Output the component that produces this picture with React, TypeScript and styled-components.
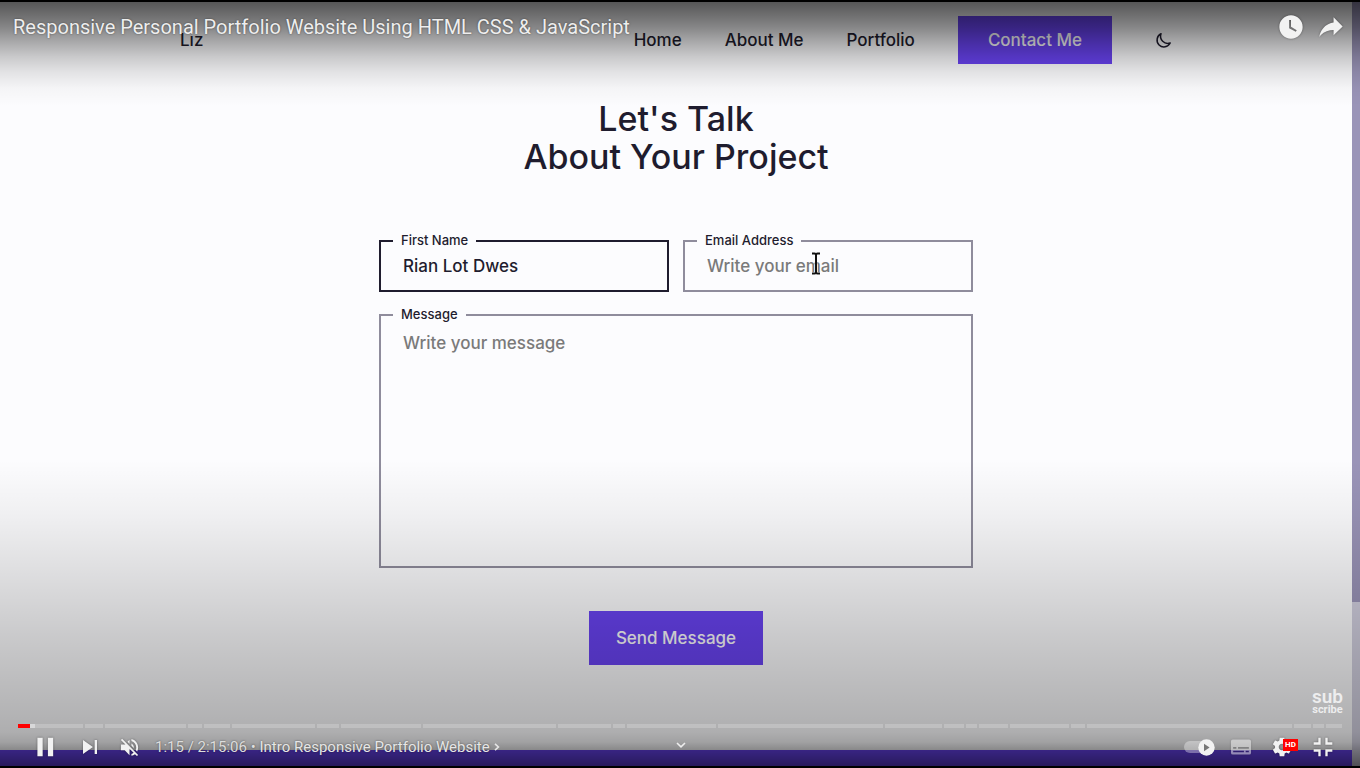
import React from "react";
import styled, { createGlobalStyle } from "styled-components";

const GlobalStyle = createGlobalStyle`
  * { box-sizing: border-box; }
  body { margin: 0; background: #000; }
  button, input, textarea { font: inherit; color: inherit; margin: 0; }
`;

const display = `Inter, "Noto Sans", sans-serif`;

const Player = styled.div`
  display: grid;
  min-height: 100vh;
  padding: 2px 0;
  background: #000;
`;

/* The recorded web page */

const Video = styled.div`
  grid-area: 1 / 1;
  display: flex;
  background: #fcfcfe;
  color: #1f1c2e;
  font: 500 17px/20px ${display};
`;

const Page = styled.div`
  flex: 1;
  min-width: 0;
  display: flex;
  flex-direction: column;
  align-items: center;
`;

const Scrollbar = styled.div`
  width: 8px;
  background: #d2d0e0;
`;

const ScrollThumb = styled.div`
  height: 78.5%;
  background: #9a94b8;
`;

const Header = styled.header`
  display: flex;
  align-items: center;
  justify-content: space-between;
  width: 100%;
  max-width: 992px;
  padding: 14px 0;
`;

const Nav = styled.nav`
  display: flex;
  align-items: center;
  gap: 43px;
`;

const NavLink = styled.a`
  color: inherit;
  text-decoration: none;
`;

const Filled = styled.a`
  padding: 14px 30px;
  background: #6943f2;
  color: #fcfcfe;
  text-decoration: none;
`;

const PlainButton = styled.button`
  display: grid;
  place-items: center;
  padding: 0;
  border: 0;
  background: none;
`;

const Heading = styled.h1`
  margin: 22px 0 64px;
  font-size: 34px;
  font-weight: 500;
  line-height: 38px;
  text-align: center;
`;

const Form = styled.form`
  display: grid;
  grid-template-columns: 1fr 1fr;
  gap: 22px 14px;
  width: 100%;
  max-width: 594px;
`;

const Field = styled.div<{ $wide?: boolean }>`
  position: relative;
  display: grid;
  grid-column: ${(p) => (p.$wide ? "1 / -1" : "auto")};
`;

const Label = styled.label`
  position: absolute;
  top: -8px;
  left: 14px;
  padding: 0 8px;
  background: #fcfcfe;
  font-size: 13px;
  line-height: 16px;
`;

const TextInput = styled.input`
  width: 100%;
  height: 52px;
  padding: 0 22px;
  border: 2px solid #8f8c9c;
  border-radius: 0;
  background: none;
  outline: none;
  &::placeholder { color: #7a7a7a; opacity: 1; }
  &:not(:placeholder-shown) { border-color: #1f1c2e; }
`;

const TextArea = styled.textarea`
  width: 100%;
  height: 254px;
  padding: 17px 22px;
  border: 2px solid #8f8c9c;
  border-radius: 0;
  background: none;
  outline: none;
  resize: none;
  &::placeholder { color: #7a7a7a; opacity: 1; }
`;

const Submit = styled.button`
  grid-column: 1 / -1;
  justify-self: center;
  margin-top: 21px;
  padding: 17px 27px;
  border: 0;
  background: #6943f2;
  color: #fcfcfe;
`;

const Pointer = styled.svg`
  position: absolute;
  top: 12px;
  left: 128px;
`;

const Footer = styled.footer`
  align-self: stretch;
  height: 16px;
  margin-top: auto;
  background: #6943f2;
`;

/* The player controls over it */

const Chrome = styled.div`
  grid-area: 1 / 1;
  z-index: 1;
  display: flex;
  flex-direction: column;
  color: #eee;
  font-family: Roboto, sans-serif;
  background:
    linear-gradient(to bottom,
      rgba(0, 0, 0, 0.66) 0px,
      rgba(0, 0, 0, 0.6) 8px,
      rgba(0, 0, 0, 0.47) 25px,
      rgba(0, 0, 0, 0.33) 40px,
      rgba(0, 0, 0, 0.2) 55px,
      rgba(0, 0, 0, 0.1) 70px,
      rgba(0, 0, 0, 0.03) 86px,
      rgba(0, 0, 0, 0) 104px),
    linear-gradient(to top,
      rgba(0, 0, 0, 0.62) 0px,
      rgba(0, 0, 0, 0.46) 16px,
      rgba(0, 0, 0, 0.36) 24px,
      rgba(0, 0, 0, 0.31) 34px,
      rgba(0, 0, 0, 0.29) 50px,
      rgba(0, 0, 0, 0.25) 86px,
      rgba(0, 0, 0, 0.2) 130px,
      rgba(0, 0, 0, 0.13) 186px,
      rgba(0, 0, 0, 0.05) 250px,
      rgba(0, 0, 0, 0) 306px);
`;

const TitleBar = styled.div`
  display: flex;
  align-items: center;
  padding: 6px 9px 0 13px;
`;

const Title = styled.a`
  flex: 1;
  color: #eee;
  font-size: 20px;
  line-height: 24px;
  text-decoration: none;
  text-shadow: 0 0 2px rgba(0, 0, 0, 0.5);
`;

const Control = styled(PlainButton)<{ $w: number }>`
  position: relative;
  width: ${(p) => p.$w}px;
  height: 38px;
  color: #f2f2f2;
  svg { filter: drop-shadow(0 0 1px rgba(0, 0, 0, 0.4)); }
`;

const Watermark = styled.button`
  display: flex;
  flex-direction: column;
  align-items: center;
  align-self: flex-end;
  margin: auto 17px 9px 0;
  padding: 0;
  border: 0;
  background: none;
  color: #ededee;
  font-size: 11px;
  font-weight: 700;
  line-height: 11px;
`;

const WatermarkTop = styled.span`
  font-size: 19px;
  font-weight: 600;
  line-height: 14px;
`;

const Seek = styled.div`
  position: relative;
  display: flex;
  gap: 2px;
  height: 4px;
  margin: 0 18px;
`;

const Chapter = styled.span<{ $size: number }>`
  flex: ${(p) => p.$size} 0 0;
  display: flex;
  background: rgba(255, 255, 255, 0.2);
`;

const Played = styled.span`
  width: 12px;
  background: #f00;
`;

const Loaded = styled.span`
  width: 5px;
  background: rgba(255, 255, 255, 0.4);
`;

const SeekInput = styled.input`
  position: absolute;
  inset: 0;
  width: 100%;
  margin: 0;
  opacity: 0;
`;

const Controls = styled.div`
  display: grid;
  grid-template-columns: 1fr auto 1fr;
  height: 38px;
  padding: 0 17px 0 18px;
`;

const Group = styled.div<{ $end?: boolean }>`
  display: flex;
  align-items: center;
  justify-content: ${(p) => (p.$end ? "flex-end" : "flex-start")};
`;

const Time = styled.span`
  margin-left: 3px;
  color: #ddd;
  font-size: 15px;
  line-height: 20px;
  white-space: pre;
  text-shadow: 0 0 2px rgba(0, 0, 0, 0.5);
`;

const ChapterButton = styled.button`
  display: flex;
  align-items: center;
  gap: 4px;
  padding: 0;
  border: 0;
  background: none;
  color: #e6e6e6;
  font-size: 15px;
  line-height: 20px;
  white-space: pre;
  text-shadow: 0 0 2px rgba(0, 0, 0, 0.5);
`;

const AutoplayLabel = styled.label`
  position: relative;
  display: grid;
  place-items: center;
  width: 43px;
  height: 38px;
`;

const Autoplay = styled.input`
  appearance: none;
  width: 30px;
  height: 12px;
  border-radius: 6px;
  background: rgba(255, 255, 255, 0.35);
`;

const Knob = styled.svg`
  position: absolute;
  right: 5px;
  top: 11px;
  pointer-events: none;
`;

const Badge = styled.span`
  position: absolute;
  top: 11px;
  left: 22px;
  padding: 0 2px;
  background: #f00;
  color: #fff;
  font-size: 8px;
  font-weight: 700;
  line-height: 12px;
`;

const icons = {
  later:
    "M18,8 C12.47,8 8,12.47 8,18 C8,23.52 12.47,28 18,28 C23.52,28 28,23.52 28,18 C28,12.47 23.52,8 18,8 Z M16.4,19.02 V12 H18 V17.86 L22.9,20.7 L22.1,22.1 L16.4,19.02 Z",
  share:
    "m 20.20,14.19 0,-4.45 7.79,7.79 -7.79,7.56 0,-4.56 C 16.27,20.69 12.10,21.81 9.34,24.76 8.80,25.13 7.60,27.29 8.12,25.65 9.08,21.32 11.80,17.18 15.98,15.38 c 1.33,-0.60 2.76,-0.98 4.21,-1.19 z",
  pause: "M11.5,26 16,26 16,10 11.5,10 z M20.5,26 25,26 25,10 20.5,10 z",
  next: "M 12,24 20.5,18 12,12 V 24 z M 22,12 v 12 h 2 V 12 h -2 z",
  muted:
    "m 21.48,17.98 c 0,-1.77 -1.02,-3.29 -2.5,-4.03 v 2.21 l 2.45,2.45 c .03,-0.2 .05,-0.41 .05,-0.63 z m 2.5,0 c 0,.94 -0.2,1.82 -0.54,2.64 l 1.51,1.51 c .66,-1.24 1.03,-2.65 1.03,-4.15 0,-4.28 -2.99,-7.86 -7,-8.76 v 2.05 c 2.89,.86 5,3.54 5,6.71 z M 9.25,8.98 l -1.27,1.26 4.72,4.73 H 7.98 v 6 H 11.98 l 5,5 v -6.73 l 4.25,4.25 c -0.67,.52 -1.42,.93 -2.25,1.18 v 2.06 c 1.38,-0.31 2.63,-0.95 3.69,-1.81 l 2.04,2.05 1.27,-1.27 -9,-9 -7.72,-7.72 z m 7.72,.99 -2.09,2.08 2.09,2.09 V 9.98 z",
  captions:
    "M11,11.5 H25 A1.6,1.6 0 0 1 26.6,13.1 V22.9 A1.6,1.6 0 0 1 25,24.5 H11 A1.6,1.6 0 0 1 9.4,22.9 V13.1 A1.6,1.6 0 0 1 11,11.5 Z M11.3,18 V19.4 H14 V18 Z M15.5,18 V19.4 H24.7 V18 Z M11.3,21.2 V22.6 H20.5 V21.2 Z M22,21.2 V22.6 H24.7 V21.2 Z",
  settings:
    "m 23.94,18.78 c .03,-0.25 .05,-0.51 .05,-0.78 0,-0.27 -0.02,-0.52 -0.05,-0.78 l 1.68,-1.32 c .15,-0.12 .19,-0.33 .09,-0.51 l -1.6,-2.76 c -0.09,-0.17 -0.31,-0.24 -0.48,-0.17 l -1.99,.8 c -0.41,-0.32 -0.86,-0.58 -1.35,-0.78 l -0.30,-2.12 c -0.02,-0.19 -0.19,-0.33 -0.39,-0.33 l -3.2,0 c -0.2,0 -0.36,.14 -0.39,.33 l -0.30,2.12 c -0.48,.2 -0.93,.47 -1.35,.78 l -1.99,-0.8 c -0.18,-0.07 -0.39,0 -0.48,.17 l -1.6,2.76 c -0.10,.17 -0.05,.39 .09,.51 l 1.68,1.32 c -0.03,.25 -0.05,.52 -0.05,.78 0,.26 .02,.52 .05,.78 l -1.68,1.32 c -0.15,.12 -0.19,.33 -0.09,.51 l 1.6,2.76 c .09,.17 .31,.24 .48,.17 l 1.99,-0.8 c .41,.32 .86,.58 1.35,.78 l .30,2.12 c .02,.19 .19,.33 .39,.33 l 3.2,0 c .2,0 .36,-0.14 .39,-0.33 l .30,-2.12 c .48,-0.2 .93,-0.47 1.35,-0.78 l 1.99,.8 c .18,.07 .39,0 .48,-0.17 l 1.6,-2.76 c .09,-0.17 .05,-0.39 -0.09,-0.51 l -1.68,-1.32 0,0 z m -5.94,2.01 c -1.54,0 -2.8,-1.25 -2.8,-2.8 0,-1.54 1.25,-2.8 2.8,-2.8 1.54,0 2.8,1.25 2.8,2.8 0,1.54 -1.25,2.8 -2.8,2.8 l 0,0 z",
  exit: "m 14,14 -4,0 0,2 6,0 0,-6 -2,0 0,4 z m 8,0 0,-4 -2,0 0,6 6,0 0,-2 -4,0 z m -2,12 2,0 0,-4 4,0 0,-2 -6,0 0,6 z m -10,-4 4,0 0,4 2,0 0,-6 -6,0 0,2 z",
};

const Icon = ({ name, size = 28, opacity = 1 }: { name: keyof typeof icons; size?: number; opacity?: number }) => (
  <svg width={size} height={size} viewBox="6 6 24 24" fill="currentColor" fillRule="evenodd" opacity={opacity} aria-hidden="true">
    <path d={icons[name]} />
  </svg>
);

const chapters = [65, 18, 80, 14, 26, 83, 22, 80, 132, 53, 12, 89, 164, 57, 20, 11, 29, 59, 14, 204, 17, 11, 16];

export default function App() {
  return (
    <>
      <GlobalStyle />
      <Player>
        <Video>
          <Page>
            <Header>
              <NavLink href="#top">Liz</NavLink>
              <Nav>
                <NavLink href="#home">Home</NavLink>
                <NavLink href="#about">About Me</NavLink>
                <NavLink href="#portfolio">Portfolio</NavLink>
                <Filled href="#contact">Contact Me</Filled>
                <PlainButton type="button" aria-label="Dark theme">
                  <svg width="17" height="17" viewBox="0 0 17 17" fill="none" stroke="currentColor" strokeWidth="1.5" strokeLinejoin="round">
                    <path d="M6 1.800A6.900 6.900 0 1 0 15.200 11A7.200 7.200 0 0 1 6 1.800Z" />
                  </svg>
                </PlainButton>
              </Nav>
            </Header>
            <Heading>
              Let's Talk
              <br />
              About Your Project
            </Heading>
            <Form onSubmit={(e) => e.preventDefault()}>
              <Field>
                <TextInput id="name" defaultValue="Rian Lot Dwes" placeholder="Write your name" />
                <Label htmlFor="name">First Name</Label>
              </Field>
              <Field>
                <TextInput id="email" type="email" placeholder="Write your email" />
                <Label htmlFor="email">Email Address</Label>
                <Pointer width="10" height="23" viewBox="0 0 10 23" aria-hidden="true">
                  <path d="M1 1.500H3.500Q5 1.500 5 3Q5 1.500 6.500 1.500H9M5 3V20M1 21.500H3.500Q5 21.500 5 20Q5 21.500 6.500 21.500H9" fill="none" stroke="#fff" strokeWidth="3" opacity=".7" />
                  <path d="M1 1.500H3.500Q5 1.500 5 3Q5 1.500 6.500 1.500H9M5 3V20M1 21.500H3.500Q5 21.500 5 20Q5 21.500 6.500 21.500H9" fill="none" stroke="#111" strokeWidth="2" />
                </Pointer>
              </Field>
              <Field $wide>
                <TextArea id="message" placeholder="Write your message" />
                <Label htmlFor="message">Message</Label>
              </Field>
              <Submit type="submit">Send Message</Submit>
            </Form>
            <Footer />
          </Page>
          <Scrollbar>
            <ScrollThumb />
          </Scrollbar>
        </Video>

        <Chrome>
          <TitleBar>
            <Title href="#video">Responsive Personal Portfolio Website Using HTML CSS &amp; JavaScript</Title>
            <Control $w={40} type="button" aria-label="Watch later"><Icon name="later" /></Control>
            <Control $w={40} type="button" aria-label="Share"><Icon name="share" /></Control>
          </TitleBar>
          <Watermark type="button">
            <WatermarkTop>sub</WatermarkTop>
            scribe
          </Watermark>
          <Seek>
            {chapters.map((size, i) => (
              <Chapter key={i} $size={size}>
                {i === 0 && (
                  <>
                    <Played />
                    <Loaded />
                  </>
                )}
              </Chapter>
            ))}
            <SeekInput type="range" aria-label="Seek" min={0} max={8106} defaultValue={75} />
          </Seek>
          <Controls>
            <Group>
              <Control $w={54} type="button" aria-label="Pause"><Icon name="pause" /></Control>
              <Control $w={36} type="button" aria-label="Next"><Icon name="next" /></Control>
              <Control $w={44} type="button" aria-label="Unmute"><Icon name="muted" size={23} /></Control>
              <Time>1:15 / 2:15:06 • </Time>
              <ChapterButton type="button">
                Intro Responsive Portfolio Website
                <svg width="6" height="8" viewBox="0 0 6 8" fill="none" stroke="currentColor" strokeWidth="1.6" aria-hidden="true">
                  <path d="M1 .8L4.400 4L1 7.200" />
                </svg>
              </ChapterButton>
            </Group>
            <PlainButton type="button" aria-label="More">
              <svg width="10" height="10" viewBox="0 0 10 10" fill="none" stroke="#eee" strokeWidth="1.600">
                <path d="M1 1L5 4.800L9 1" />
              </svg>
            </PlainButton>
            <Group $end>
              <AutoplayLabel>
                <Autoplay type="checkbox" aria-label="Autoplay" defaultChecked />
                <Knob width="17" height="17" viewBox="0 0 17 17" aria-hidden="true">
                  <circle cx="8.500" cy="8.500" r="8.200" fill="#f2f2f2" />
                  <path d="M6 4.800V12.200L11.600 8.500Z" fill="#777" />
                </Knob>
              </AutoplayLabel>
              <Control $w={41} type="button" aria-label="Subtitles"><Icon name="captions" opacity={0.5} /></Control>
              <Control $w={41} type="button" aria-label="Settings">
                <Icon name="settings" />
                <Badge>HD</Badge>
              </Control>
              <Control $w={41} type="button" aria-label="Exit full screen"><Icon name="exit" /></Control>
            </Group>
          </Controls>
        </Chrome>
      </Player>
    </>
  );
}
